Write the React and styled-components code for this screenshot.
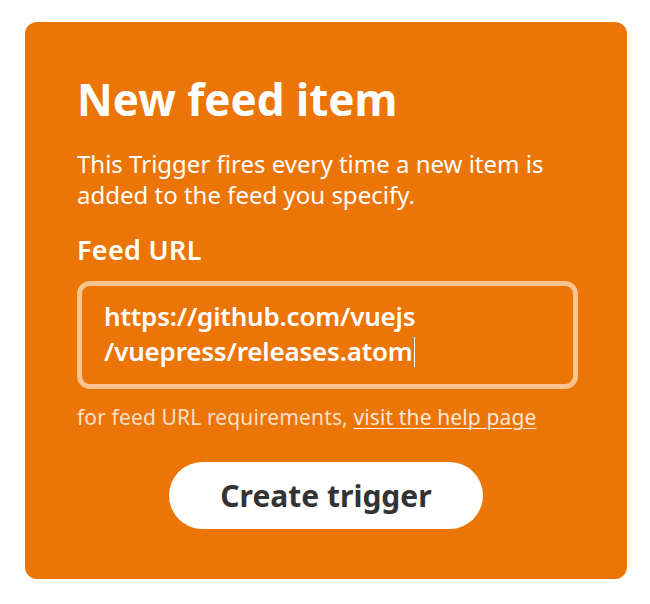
import React from "react";
import styled, { createGlobalStyle } from "styled-components";

const Global = createGlobalStyle`
  html, body { margin: 0; padding: 0; background: #ffffff; }
  body { font-family: "Noto Sans", "Open Sans", sans-serif; }
`;

const Page = styled.div`
  padding: 22px 23px 25px 25px;
`;

const Card = styled.section`
  background: #ec7507;
  border-radius: 12px;
  height: 557px;
  box-sizing: border-box;
  padding: 49px 40px 0 52px;
  display: flex;
  flex-direction: column;
  color: #ffffff;
`;

const Title = styled.h1`
  margin: 0;
  font-size: 44px;
  font-weight: 700;
  line-height: 56px;
`;

const Description = styled.p`
  margin: 21px 0 0;
  font-size: 24px;
  line-height: 31px;
  font-weight: 400;
  white-space: nowrap;
`;

const Label = styled.label`
  margin-top: 24px;
  font-size: 27px;
  font-weight: 600;
  line-height: 32px;
  letter-spacing: 0.3px;
`;

const InputBox = styled.div`
  margin-top: 15px;
  width: 501px;
  height: 108px;
  box-sizing: border-box;
  border: 5px solid #f9c48e;
  border-radius: 13px;
  padding: 13px 22px;
  font-size: 26px;
  font-weight: 600;
  line-height: 35px;
  letter-spacing: -0.2px;
`;

const Caret = styled.span`
  display: inline-block;
  width: 1px;
  height: 30px;
  background: #ffffff;
  vertical-align: -6px;
  margin-left: 1px;
`;

const Help = styled.p`
  margin: 15px 0 0;
  font-size: 21px;
  line-height: 26px;
  letter-spacing: 0.13px;
  color: rgba(255, 255, 255, 0.78);
  white-space: nowrap;
`;

const HelpLink = styled.a`
  color: rgba(255, 255, 255, 0.85);
  text-decoration: underline;
  text-decoration-thickness: 1px;
  text-underline-offset: 3px;
`;

const ButtonRow = styled.div`
  display: flex;
  justify-content: center;
  margin-top: 32px;
  padding-right: 12px;
`;

const Button = styled.button`
  width: 314px;
  height: 67px;
  border: none;
  border-radius: 34px;
  background: #ffffff;
  color: #333333;
  font-family: "Noto Sans", "Open Sans", sans-serif;
  font-size: 30px;
  font-weight: 700;
  cursor: pointer;
`;

export default function App() {
  return (
    <>
      <Global />
      <Page>
        <Card>
          <Title>New feed item</Title>
          <Description>
            This Trigger fires every time a new item is
            <br />
            added to the feed you specify.
          </Description>
          <Label>Feed URL</Label>
          <InputBox>
            https://github.com/vuejs
            <br />
            /vuepress/releases.atom
            <Caret />
          </InputBox>
          <Help>
            for feed URL requirements, <HelpLink href="#">visit the help page</HelpLink>
          </Help>
          <ButtonRow>
            <Button>Create trigger</Button>
          </ButtonRow>
        </Card>
      </Page>
    </>
  );
}
